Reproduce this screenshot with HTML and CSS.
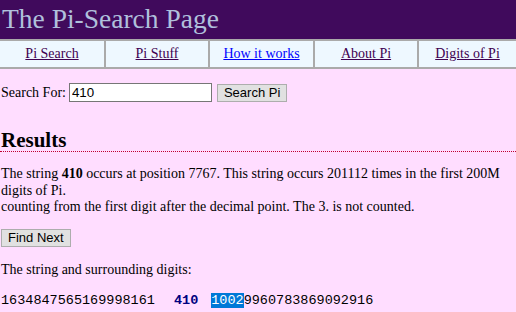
FILE: index.html
```html
<!DOCTYPE html>
<html>
<head>
<meta charset="utf-8">
<title>The Pi-Search Page</title>
<link rel="stylesheet" href="styles.css">
</head>
<body>
<header class="banner">
  <h1 class="banner-title">The Pi-Search Page</h1>
</header>
<nav class="tabs">
  <div class="tab"><a class="visited" href="#">Pi Search</a></div>
  <div class="tab"><a class="visited" href="#">Pi Stuff</a></div>
  <div class="tab"><a class="fresh" href="#">How it works</a></div>
  <div class="tab"><a class="visited" href="#">About Pi</a></div>
  <div class="tab"><a class="visited" href="#">Digits of Pi</a></div>
</nav>
<main class="content">
  <form class="search">
    <label class="search-label" for="q">Search For:</label>
    <input class="search-input" id="q" type="text" value="410">
    <button class="btn" type="button">Search Pi</button>
  </form>
  <h2 class="results-title">Results</h2>
  <p class="result-text">The string <b>410</b> occurs at position 7767. This string occurs 201112 times in the first 200M digits of Pi.<br>counting from the first digit after the decimal point. The 3. is not counted.</p>
  <div class="next-row"><button class="btn" type="button">Find Next</button></div>
  <p class="result-text surround">The string and surrounding digits:</p>
  <p class="digits">1634847565169998161<span class="gap gap-a"></span><b class="hit">410</b><span class="gap gap-b"></span><span class="sel">1002</span>9960783869092916</p>
</main>
</body>
</html>
```

FILE: styles.css
```css
html, body {
  margin: 0;
  padding: 0;
}
body {
  background: #ffddff;
  font-family: "Liberation Serif", "Times New Roman", serif;
  font-size: 14px;
  color: #000;
}
.banner {
  background: #400a5c;
  height: 39px;
  overflow: hidden;
}
.banner-title {
  margin: 0;
  padding: 0 0 0 2px;
  font-weight: normal;
  font-size: 27.5px;
  line-height: 38px;
  color: #b0c0dc;
}
.tabs {
  display: grid;
  grid-template-columns: 104px 102px 103px 102px 1fr;
  column-gap: 2px;
  background: #aaaaaa;
  border-top: 2px solid #aaaaaa;
  border-bottom: 2px solid #aaaaaa;
}
.tab {
  background: #eef8ff;
  height: 26px;
  display: flex;
  align-items: center;
  justify-content: center;
  font-size: 14px;
}
.tab a.visited { color: #400050; }
.tab a.fresh { color: #0000ff; }
.content {
  padding: 0 1px;
}
.search {
  margin: 14px 0 0;
  display: flex;
  align-items: center;
}
.search-label {
  margin-right: 3px;
}
.search-input {
  width: 137px;
  height: 15px;
  padding: 1px 2px;
  border: 1px solid #767676;
  font-family: "Liberation Sans", Arial, sans-serif;
  font-size: 13.33px;
  background: #fff;
  margin: 0 5px 0 0;
}
.btn {
  font-family: "Liberation Sans", Arial, sans-serif;
  font-size: 13px;
  background: #e1e1e1;
  border: 1px solid #adadad;
  padding: 0 6px;
  height: 18px;
  white-space: nowrap;
  color: #000;
}
.results-title {
  margin: 28px -1px 0;
  font-size: 21px;
  line-height: 21px;
  padding: 0 0 0 1px;
  border-bottom: 1px dotted #c00030;
}
.result-text {
  margin: 14px 0 0;
  line-height: 16.5px;
}
.next-row {
  margin-top: 13px;
  display: flex;
}
.surround {
  margin-top: 15px;
}
.digits {
  margin: 15px 0 0;
  font-family: "Liberation Mono", "Courier New", monospace;
  font-size: 13.5px;
  line-height: 16px;
}
.gap {
  display: inline-block;
}
.gap-a { width: 19px; }
.gap-b { width: 13px; }
.hit {
  color: #000080;
}
.sel {
  background: #0078d7;
  color: #fff;
}
```
